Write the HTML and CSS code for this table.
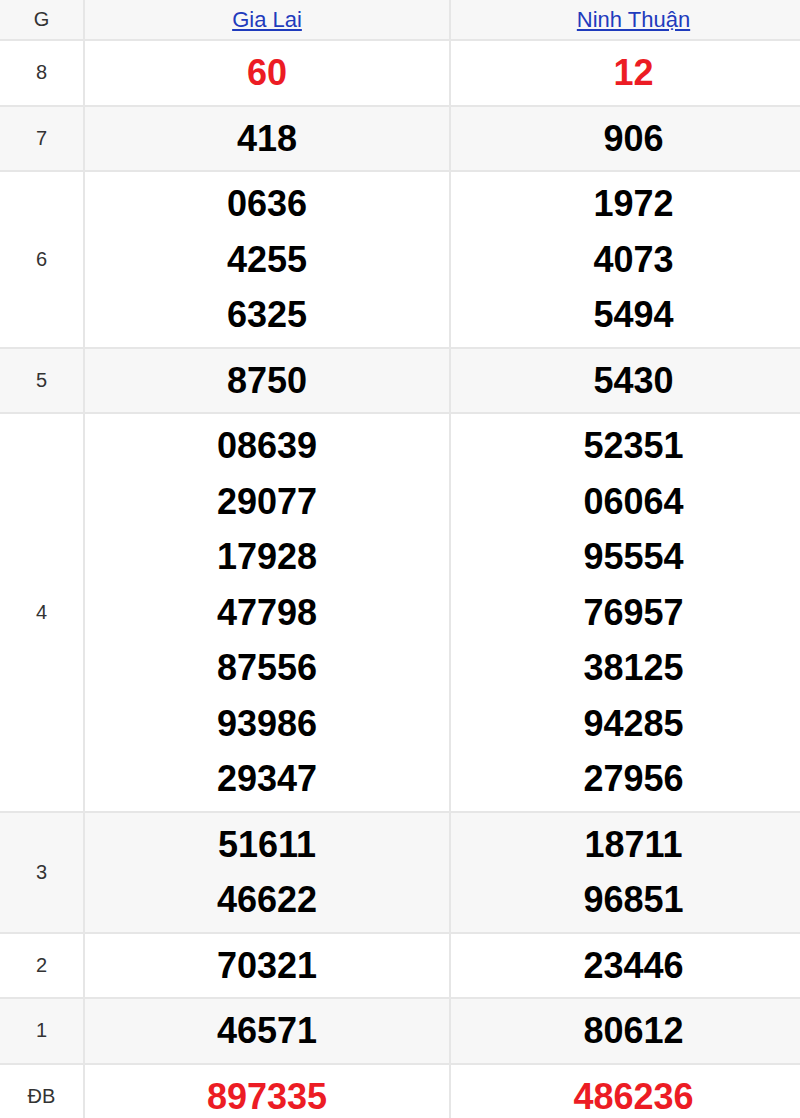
FILE: index.html
```html
<!DOCTYPE html>
<html lang="vi">
<head>
<meta charset="utf-8">
<title>Kết quả xổ số</title>
<link rel="stylesheet" href="styles.css">
</head>
<body>
<table class="kq">
  <colgroup>
    <col class="c-label">
    <col class="c-prov">
    <col class="c-prov">
  </colgroup>
  <thead>
    <tr class="head">
      <th class="lbl">G</th>
      <th><a href="#">Gia Lai</a></th>
      <th><a href="#">Ninh Thuận</a></th>
    </tr>
  </thead>
  <tbody>
    <tr>
      <td class="lbl">8</td>
      <td class="num red">60</td>
      <td class="num red">12</td>
    </tr>
    <tr class="alt">
      <td class="lbl">7</td>
      <td class="num">418</td>
      <td class="num">906</td>
    </tr>
    <tr>
      <td class="lbl">6</td>
      <td class="num"><div>0636</div><div>4255</div><div>6325</div></td>
      <td class="num"><div>1972</div><div>4073</div><div>5494</div></td>
    </tr>
    <tr class="alt">
      <td class="lbl">5</td>
      <td class="num">8750</td>
      <td class="num">5430</td>
    </tr>
    <tr>
      <td class="lbl">4</td>
      <td class="num"><div>08639</div><div>29077</div><div>17928</div><div>47798</div><div>87556</div><div>93986</div><div>29347</div></td>
      <td class="num"><div>52351</div><div>06064</div><div>95554</div><div>76957</div><div>38125</div><div>94285</div><div>27956</div></td>
    </tr>
    <tr class="alt">
      <td class="lbl">3</td>
      <td class="num"><div>51611</div><div>46622</div></td>
      <td class="num"><div>18711</div><div>96851</div></td>
    </tr>
    <tr>
      <td class="lbl">2</td>
      <td class="num">70321</td>
      <td class="num">23446</td>
    </tr>
    <tr class="alt">
      <td class="lbl">1</td>
      <td class="num">46571</td>
      <td class="num">80612</td>
    </tr>
    <tr>
      <td class="lbl">ĐB</td>
      <td class="num red">897335</td>
      <td class="num red">486236</td>
    </tr>
  </tbody>
</table>
</body>
</html>
```
FILE: styles.css
```css
html, body {
  margin: 0;
  padding: 0;
  overflow: hidden;
  background: #ffffff;
}

body {
  font-family: "Liberation Sans", Arial, sans-serif;
  color: #222;
}

.kq {
  width: 816px;
  border-collapse: collapse;
  table-layout: fixed;
}

.c-label { width: 84px; }
.c-prov { width: 366px; }

.kq th,
.kq td {
  border-bottom: 2px solid #e6e6e6;
  border-left: 2px solid #e6e6e6;
  text-align: center;
  vertical-align: middle;
  padding: 0;
}

.kq th.lbl,
.kq td.lbl {
  border-left: none;
  font-size: 20px;
  font-weight: normal;
  color: #333;
}

.kq .head th {
  background: #f7f7f7;
  height: 39px;
  font-weight: normal;
}

.kq .head th a {
  font-size: 22px;
  color: #1f3bbd;
  text-decoration: underline;
}

.kq .alt td {
  background: #f7f7f7;
}

.kq td.num {
  font-size: 36px;
  font-weight: bold;
  line-height: 55.5px;
  padding: 4px 0;
  color: #000;
}

.kq td.num.red {
  color: #ec1c24;
}
```
